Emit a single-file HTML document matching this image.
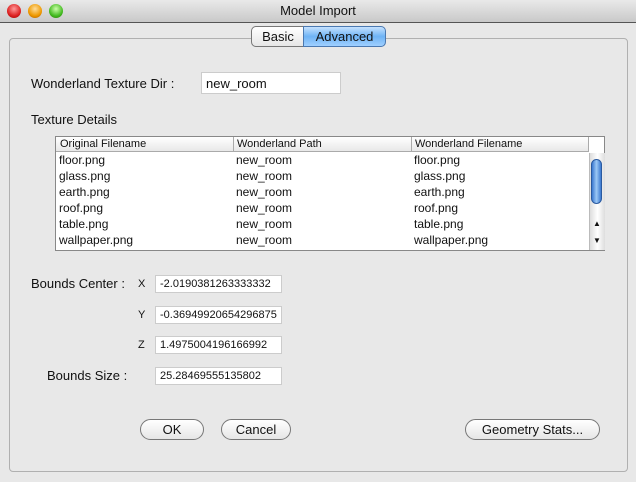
<html><head><style>
body{margin:0;width:636px;height:482px;background:#e8e8e8;font-family:"Liberation Sans",sans-serif;position:relative;overflow:hidden;font-size:13px;color:#111}
.a{position:absolute}
.tb{left:0;top:0;width:636px;height:22px;background:linear-gradient(#e9e9e9,#c9c9c9);border-bottom:1px solid #555;text-align:center;line-height:22px;font-size:13px}
.dot{width:14px;height:14px;border-radius:50%;top:4px}
.panel{left:9px;top:38px;width:617px;height:432px;border:1px solid #b0b0b0;border-radius:4px;background:#e8e8e8}
.tf{background:#fff;border:1px solid #ccc;box-sizing:border-box;padding-left:4px;font-size:11px;line-height:17px}
.btn{border:1px solid #777;border-radius:11px;background:linear-gradient(#fff,#e6e6e6);text-align:center;box-sizing:border-box;line-height:19px;font-size:13px}
.td{font-size:12px;line-height:16px;height:16px}
</style></head><body>
<div class="a tb">Model Import</div>
<div class="a dot" style="left:7px;background:radial-gradient(circle at 50% 35%,#f99,#d22 60%,#900)"></div>
<div class="a dot" style="left:28px;background:radial-gradient(circle at 50% 35%,#fd9,#e90 60%,#a50)"></div>
<div class="a dot" style="left:49px;background:radial-gradient(circle at 50% 35%,#cfa,#4b2 60%,#270)"></div>
<div class="a panel"></div>
<div class="a btn" style="left:251px;top:26px;width:54px;height:21px;border-radius:5px 0 0 5px;line-height:19px">Basic</div>
<div class="a btn" style="left:303px;top:26px;width:83px;height:21px;border-radius:0 5px 5px 0;background:linear-gradient(#c6e2ff,#6eb3f5 50%,#9fd0ff);border-color:#4a78b0;line-height:19px">Advanced</div>
<div class="a" style="left:31px;top:76px">Wonderland Texture Dir :</div>
<div class="a tf" style="left:201px;top:72px;width:140px;height:22px;font-size:13px;line-height:21px">new_room</div>
<div class="a" style="left:31px;top:112px">Texture Details</div>
<div class="a" style="left:55px;top:136px;width:550px;height:115px;border:1px solid #888;background:#fff;box-sizing:border-box"></div>
<div class="a" style="left:56px;top:137px;width:533px;height:14px;background:linear-gradient(#fff,#e8e8e8);border-bottom:1px solid #aaa;font-size:11px;line-height:14px">
<span class="a" style="left:4px">Original Filename</span><span class="a" style="left:177px;border-left:1px solid #aaa;padding-left:3px;height:14px">Wonderland Path</span><span class="a" style="left:355px;border-left:1px solid #aaa;padding-left:3px;height:14px">Wonderland Filename</span><span class="a" style="left:532px;border-left:1px solid #aaa;height:14px"></span></div>
<div class="a" style="left:59px;top:152px"><div class="td">floor.png</div><div class="td">glass.png</div><div class="td">earth.png</div><div class="td">roof.png</div><div class="td">table.png</div><div class="td">wallpaper.png</div></div>
<div class="a" style="left:236px;top:152px"><div class="td">new_room</div><div class="td">new_room</div><div class="td">new_room</div><div class="td">new_room</div><div class="td">new_room</div><div class="td">new_room</div></div>
<div class="a" style="left:414px;top:152px"><div class="td">floor.png</div><div class="td">glass.png</div><div class="td">earth.png</div><div class="td">roof.png</div><div class="td">table.png</div><div class="td">wallpaper.png</div></div>
<div class="a" style="left:589px;top:153px;width:15px;height:97px;background:linear-gradient(90deg,#ddd,#fff,#ddd);border-left:1px solid #bbb"></div>
<div class="a" style="left:591px;top:159px;width:11px;height:45px;border-radius:6px;background:linear-gradient(90deg,#3a78d0,#9cc8f5,#3a78d0);border:1px solid #2a5aa0;box-sizing:border-box"></div>
<div class="a" style="left:593px;top:219px;font-size:8px">▲</div>
<div class="a" style="left:593px;top:236px;font-size:8px">▼</div>
<div class="a" style="left:31px;top:276px">Bounds Center :</div>
<div class="a" style="left:138px;top:278px;font-size:11px">X</div>
<div class="a" style="left:138px;top:309px;font-size:11px">Y</div>
<div class="a" style="left:138px;top:339px;font-size:11px">Z</div>
<div class="a" style="left:47px;top:368px">Bounds Size :</div>
<div class="a tf" style="left:155px;top:275px;width:127px;height:18px">-2.0190381263333332</div>
<div class="a tf" style="left:155px;top:306px;width:127px;height:18px">-0.36949920654296875</div>
<div class="a tf" style="left:155px;top:336px;width:127px;height:18px">1.4975004196166992</div>
<div class="a tf" style="left:155px;top:367px;width:127px;height:18px">25.28469555135802</div>
<div class="a btn" style="left:140px;top:419px;width:64px;height:21px">OK</div>
<div class="a btn" style="left:221px;top:419px;width:70px;height:21px">Cancel</div>
<div class="a btn" style="left:465px;top:419px;width:135px;height:21px">Geometry Stats...</div>
</body></html>
